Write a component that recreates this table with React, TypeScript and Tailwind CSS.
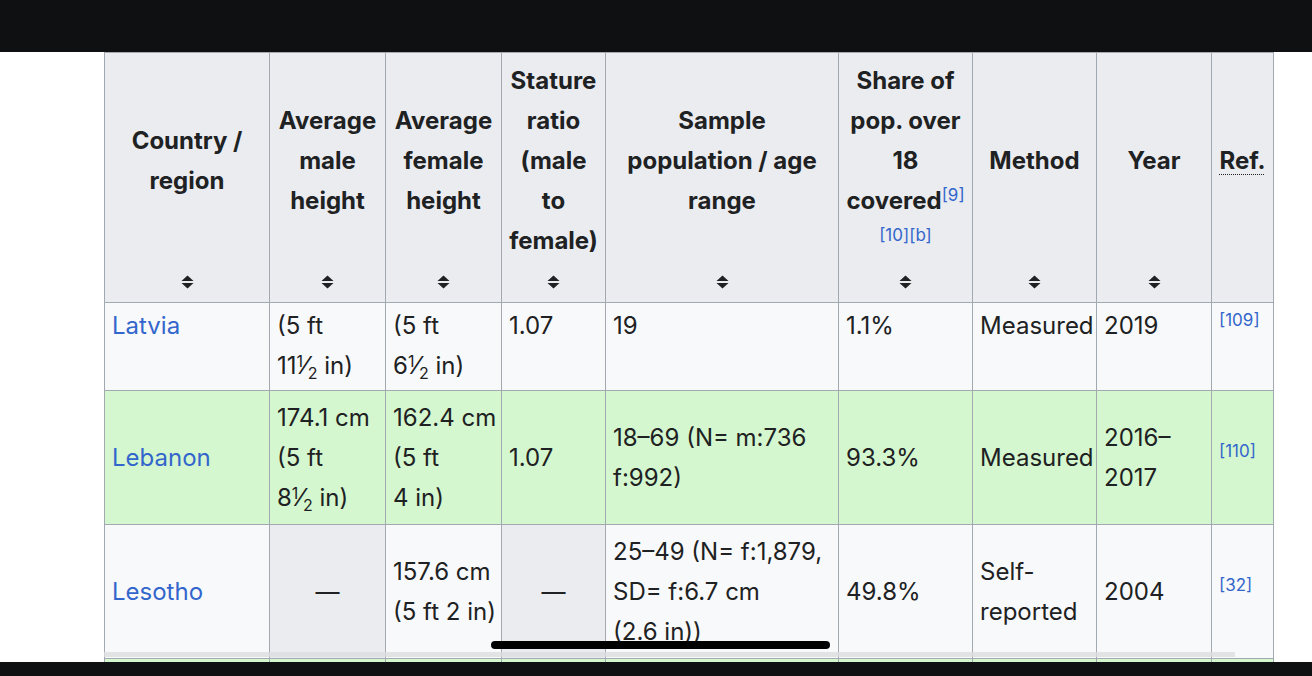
import React from "react";

const SortIcon = () => (
  <svg width="13" height="14" viewBox="0 0 13 14" className="block">
    <path d="M0.5 6L6.5 0.5L12.5 6Z" fill="#202122" />
    <path d="M0.5 8L6.5 13.5L12.5 8Z" fill="#202122" />
  </svg>
);

const Ref = ({ children }: { children: React.ReactNode }) => (
  <sup className="text-[17px] font-normal text-[#3366cc]">{children}</sup>
);

const Frac = ({ w, n, d }: { w: string; n: string; d: string }) => (
  <span>
    {w}
    <span className="text-[16px] leading-none align-[0.42em]">{n}</span>⁄
    <span className="text-[16px] leading-none align-[-0.3em]">{d}</span>
  </span>
);

const headers: { label: React.ReactNode; sort: boolean }[] = [
  { label: <>Country /<br />region</>, sort: true },
  { label: <>Average<br />male<br />height</>, sort: true },
  { label: <>Average<br />female<br />height</>, sort: true },
  { label: <>Stature<br />ratio<br />(male<br />to<br />female)</>, sort: true },
  { label: <>Sample<br />population / age<br />range</>, sort: true },
  {
    label: (
      <>
        Share of<br />pop. over<br />18<br />covered<Ref>[9]</Ref>
        <br />
        <Ref>[10][b]</Ref>
      </>
    ),
    sort: true,
  },
  { label: <>Method</>, sort: true },
  { label: <>Year</>, sort: true },
  {
    label: <span className="underline decoration-dotted decoration-1 underline-offset-[5px]">Ref.</span>,
    sort: false,
  },
];

const colWidths = [165, 116, 116, 104, 233, 134, 124, 115, 62];

const base = "border border-[#a2a9b1] px-[7px] whitespace-nowrap";
const cell = `${base} text-left`;
const dash = `${base} bg-[#eaecf0] text-center`;
const link = "text-[#3366cc]";

export default function App() {
  return (
    <div className="relative flex h-[676px] w-[1312px] flex-col overflow-hidden bg-white font-['Inter','Liberation_Sans',sans-serif] text-[24px] leading-[40px] text-[#202122]">
      <div className="h-[52px] shrink-0 bg-[#0f1012]" />

      <div className="relative flex-1 overflow-hidden pl-[104px]">
        <table className="table-fixed border-collapse" style={{ width: 1170 }}>
          <colgroup>
            {colWidths.map((w, i) => (
              <col key={i} style={{ width: w }} />
            ))}
          </colgroup>
          <thead>
            <tr className="bg-[#eaecf0]">
              {headers.map((h, i) => (
                <th key={i} className="border border-[#a2a9b1] p-0 align-top font-bold">
                  <div className="flex h-[249px] flex-col">
                    <div className="flex flex-1 items-center justify-center whitespace-nowrap px-[4px] pt-[7px] text-center">
                      <div>{h.label}</div>
                    </div>
                    <div className="flex h-[40px] items-center justify-center">
                      {h.sort && <SortIcon />}
                    </div>
                  </div>
                </th>
              ))}
            </tr>
          </thead>
          <tbody>
            {/* Latvia */}
            <tr className="h-[88px] bg-[#f8f9fa] align-top">
              <td className={`${cell} pt-[3px]`}>
                <span className={link}>Latvia</span>
              </td>
              <td className={`${cell} pt-[3px]`}>
                (5 ft<br />
                <Frac w="11" n="1" d="2" /> in)
              </td>
              <td className={`${cell} pt-[3px]`}>
                (5 ft<br />
                <Frac w="6" n="1" d="2" /> in)
              </td>
              <td className={`${cell} pt-[3px]`}>1.07</td>
              <td className={`${cell} pt-[3px]`}>19</td>
              <td className={`${cell} pt-[3px]`}>1.1%</td>
              <td className={`${cell} pt-[3px]`}>Measured</td>
              <td className={`${cell} pt-[3px]`}>2019</td>
              <td className={`${cell} pt-[3px]`}>
                <Ref>[109]</Ref>
              </td>
            </tr>

            {/* Lebanon */}
            <tr className="h-[134px] bg-[#d5f7cf] align-middle">
              <td className={cell}>
                <span className={link}>Lebanon</span>
              </td>
              <td className={cell}>
                174.1 cm<br />(5 ft<br />
                <Frac w="8" n="1" d="2" /> in)
              </td>
              <td className={cell}>
                162.4 cm<br />(5 ft<br />4 in)
              </td>
              <td className={cell}>1.07</td>
              <td className={cell}>
                18–69 (N= m:736<br />f:992)
              </td>
              <td className={cell}>93.3%</td>
              <td className={cell}>Measured</td>
              <td className={cell}>
                2016–<br />2017
              </td>
              <td className={cell}>
                <Ref>[110]</Ref>
              </td>
            </tr>

            {/* Lesotho */}
            <tr className="h-[134px] bg-[#f8f9fa] align-middle">
              <td className={cell}>
                <span className={link}>Lesotho</span>
              </td>
              <td className={dash}>—</td>
              <td className={cell}>
                157.6 cm<br />(5 ft 2 in)
              </td>
              <td className={dash}>—</td>
              <td className={cell}>
                25–49 (N= f:1,879,<br />SD= f:6.7 cm<br />(2.6 in))
              </td>
              <td className={cell}>49.8%</td>
              <td className={cell}>
                Self-<br />reported
              </td>
              <td className={cell}>2004</td>
              <td className={cell}>
                <Ref>[32]</Ref>
              </td>
            </tr>

            <tr className="h-[60px] bg-[#d5f7cf]">
              {colWidths.map((_, i) => (
                <td key={i} className={cell} />
              ))}
            </tr>
          </tbody>
        </table>

        {/* horizontal scroll indicator */}
        <div className="absolute left-[104px] top-[600px] h-[5px] w-[1131px] bg-[#dcdde0]/80" />
      </div>

      <div className="h-[14px] shrink-0 bg-[#0f1012]" />

      {/* home indicator */}
      <div className="absolute left-[491px] top-[641px] h-[8px] w-[339px] rounded-full bg-black" />
    </div>
  );
}
